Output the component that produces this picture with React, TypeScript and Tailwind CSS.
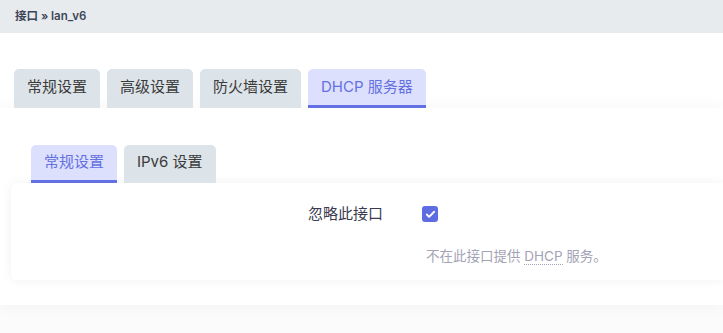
import { Check } from "lucide-react";

const font = { fontFamily: '"Inter", "Noto Sans CJK SC", sans-serif' };

function Tab({ label, active }: { label: string; active?: boolean }) {
  return (
    <div
      className={
        "flex items-center rounded-t-[5px] px-[13px] text-[15px] " +
        (active
          ? "bg-[#dce0fd] text-[#6570e2] border-b-[3px] border-[#6270e3]"
          : "bg-[#dce3e9] text-[#3b3b3b] border-b-[3px] border-transparent")
      }
    >
      {label}
    </div>
  );
}

export default function App() {
  return (
    <div className="min-h-screen w-full bg-[#fbfbfc] text-[#333]" style={font}>
      {/* breadcrumb */}
      <div className="flex h-[33px] items-center bg-[#e8ebee] px-[15px] text-[11.5px] font-semibold text-[#3c4558]">
        接口 » lan_v6
      </div>

      {/* outer tabs */}
      <div className="bg-white pt-[36px]">
        <div className="flex h-[39px] gap-[7px] px-[14px]">
          <Tab label="常规设置" />
          <Tab label="高级设置" />
          <Tab label="防火墙设置" />
          <Tab label="DHCP 服务器" active />
        </div>
      </div>

      {/* panel */}
      <div className="bg-white pb-[25px] pl-[11px] pt-[37px] shadow-[0_0_18px_rgba(0,0,0,0.045)]">
        <div className="flex h-[38px] gap-[7px] pl-[20px]">
          <Tab label="常规设置" active />
          <Tab label="IPv6 设置" />
        </div>

        <div className="h-[97px] rounded-l-[6px] bg-white shadow-[0_0_12px_rgba(0,0,0,0.06)]">
          <div className="flex items-center pt-[20px]">
            <div className="w-[372px] text-right text-[15px] text-[#3a3a50]">忽略此接口</div>
            <div className="ml-[39px] flex h-[16px] w-[16px] items-center justify-center rounded-[3px] bg-[#5e6ce2]">
              <Check className="h-[11px] w-[11px] text-white" strokeWidth={4} />
            </div>
          </div>
          <div className="ml-[415px] mt-[20px] text-[13.5px] text-[#a3a3b5]">
            不在此接口提供{" "}
            <span className="border-b border-dotted border-[#a3a3b5]">DHCP</span> 服务。
          </div>
        </div>
      </div>
    </div>
  );
}
